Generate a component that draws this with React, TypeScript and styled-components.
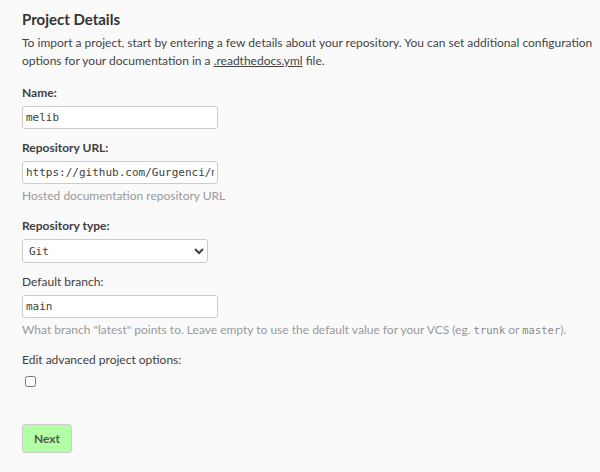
import React from "react";
import styled, { createGlobalStyle } from "styled-components";

const Global = createGlobalStyle`
  html, body { margin: 0; padding: 0; background: #fafafa; }
  body { font-family: Lato, "Open Sans", sans-serif; color: #404040; }
`;

const Page = styled.div`
  padding: 8px 4px 20px 22px;
  display: flex;
  flex-direction: column;
`;

const Title = styled.h2`
  margin: 0 0 4px 0;
  font-size: 15px;
  font-weight: 700;
  color: #333;
  line-height: 22px;
`;

const Intro = styled.p`
  margin: 0 0 14px 0;
  font-size: 12px;
  line-height: 18px;
  color: #444;
`;

const Link = styled.a`
  color: #444;
  text-decoration: underline;
`;

const Field = styled.div`
  display: flex;
  flex-direction: column;
  align-items: flex-start;
  margin-bottom: 10px;
`;

const Label = styled.label<{ $bold?: boolean }>`
  font-size: 12px;
  line-height: 18px;
  font-weight: ${(p) => (p.$bold ? 700 : 400)};
  color: #404040;
  margin-bottom: 4px;
`;

const Input = styled.input`
  box-sizing: border-box;
  width: 196px;
  height: 23px;
  padding: 2px 3px;
  font-family: "DejaVu Sans Mono", monospace;
  font-size: 11px;
  color: #404040;
  background: #fff;
  border: 1px solid #ccc;
  border-radius: 3px;
  outline: none;
`;

const Select = styled.select`
  box-sizing: border-box;
  width: 186px;
  height: 24px;
  padding: 2px 2px;
  font-family: "DejaVu Sans Mono", monospace;
  font-size: 11px;
  color: #404040;
  background: #fff;
  border: 1px solid #ccc;
  border-radius: 3px;
`;

const Help = styled.p`
  margin: 3px 0 2px 0;
  font-size: 12px;
  line-height: 18px;
  color: #999;
`;

const HelpCode = styled.code`
  font-family: "DejaVu Sans Mono", monospace;
  font-size: 10.5px;
  color: #888;
`;

const Check = styled.input`
  margin: 3px 0 0 3px;
  width: 11px;
  height: 11px;
`;

const Button = styled.button`
  margin-top: 27px;
  align-self: flex-start;
  box-sizing: border-box;
  width: 50px;
  height: 29px;
  font-family: Lato, sans-serif;
  font-size: 12px;
  font-weight: 700;
  color: #555;
  background: #b3ffa6;
  border: 1px solid #ccc;
  border-radius: 3px;
`;

export default function App() {
  return (
    <>
      <Global />
      <Page>
        <Title>Project Details</Title>
        <Intro>
          To import a project, start by entering a few details about your repository. You can set additional configuration
          options for your documentation in a <Link href="#">.readthedocs.yml</Link> file.
        </Intro>
        <Field>
          <Label $bold>Name:</Label>
          <Input defaultValue="melib" />
        </Field>
        <Field>
          <Label $bold>Repository URL:</Label>
          <Input defaultValue="https://github.com/Gurgenci/melib" />
          <Help>Hosted documentation repository URL</Help>
        </Field>
        <Field>
          <Label $bold>Repository type:</Label>
          <Select defaultValue="git">
            <option value="git">Git</option>
          </Select>
        </Field>
        <Field>
          <Label>Default branch:</Label>
          <Input defaultValue="main" />
          <Help>
            What branch "latest" points to. Leave empty to use the default value for your VCS (eg. <HelpCode>trunk</HelpCode> or{" "}
            <HelpCode>master</HelpCode>).
          </Help>
        </Field>
        <Field>
          <Label>Edit advanced project options:</Label>
          <Check type="checkbox" />
        </Field>
        <Button>Next</Button>
      </Page>
    </>
  );
}
